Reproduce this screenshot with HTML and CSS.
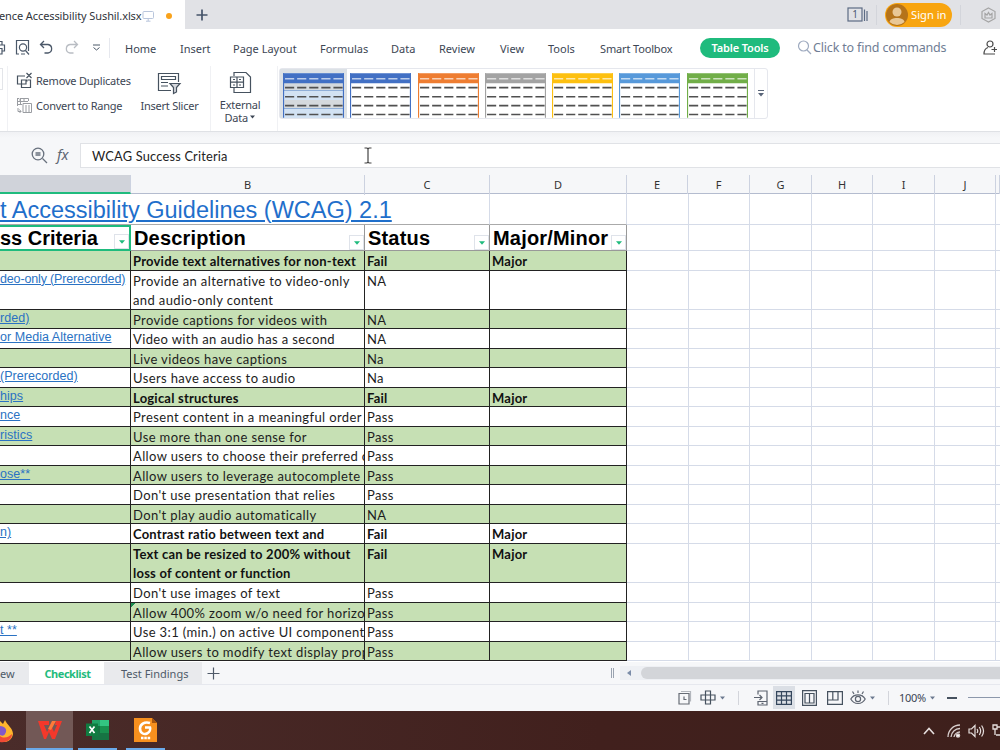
FILE: index.html
```html
<!DOCTYPE html>
<html lang="en">
<head>
  <meta charset="UTF-8">
  <title>Accessibility Sushil.xlsx</title>
  <link rel="stylesheet" href="styles.css">
</head>
<body>
  <!-- shared shapes -->
  <svg class="defs">
    <symbol id="thumb" viewBox="0 0 60 44">
      <path d="M.5 0V44M59.5 0V44" stroke="currentColor" stroke-width="1.2"/>
      <path d="M0 0H60V10H0Z" fill="currentColor"/>
      <path d="M2 5.5H59" stroke="#fff" stroke-opacity=".65" stroke-width="1.3" stroke-dasharray="9 2.9"/>
      <path d="M2 14.3H59M2 23.2H59M2 32H59M2 40.7H59" stroke="#505050" stroke-width="1.6" stroke-dasharray="9 2.9"/>
    </symbol>
    <symbol id="caret" viewBox="0 0 6 4"><path d="M0 .3H6L3 3.8Z" fill="currentColor"/></symbol>
  </svg>

  <div class="titlebar">
    <div class="tab">
      <span class="tab-name">ence Accessibility Sushil.xlsx</span>
      <svg width="13" height="12" fill="none" stroke="#b9c6dc"><rect x="1" y="1.5" width="10.5" height="7" rx="1"/><path d="M6.2 8.5V11M4 11.2H8.5"/></svg>
      <i class="dot"></i>
    </div>
    <svg class="new-tab" width="12" height="12" stroke="#45546a" stroke-width="1.7"><path d="M6 .5V11.5M.5 6H11.5"/></svg>
    <div class="title-right">
      <svg width="21" height="15" fill="none" stroke="#5c6b84" stroke-width="1.2"><rect x="1" y="1" width="14" height="13"/><path d="M17.5 2.500V14M20 4V14"/><text x="8" y="11.300" text-anchor="middle" class="badge-num">1</text></svg>
      <i class="vsep"></i>
      <div class="signin">
        <svg width="22" height="22"><circle cx="11" cy="11" r="11" fill="#b5731a"/><circle cx="11" cy="8" r="4.500" fill="#e9c795"/><path d="M3.500 18C4 12.500 18 12.500 18.500 18A11 11 0 0 1 3.500 18Z" fill="#e9c795"/></svg>
        <span>Sign in</span>
      </div>
      <i class="vsep"></i>
      <svg class="crown" width="15" height="16" fill="none" stroke="#a5a5a5" stroke-width="1.200"><path d="M7.500 1L14 4.500V11.500L7.500 15L1 11.500V4.500Z"/><path d="M4 6.500L6 8L7.500 5.500L9 8L11 6.500V11H4Z"/></svg>
    </div>
  </div>

  <div class="menubar">
    <div class="quick">
      <svg width="6" height="18" fill="none" stroke="#4b5869" stroke-width="1.200"><path d="M0 2.500H2V6M0 6H4.500V12H2M0 9.500H2V15H0"/></svg>
      <svg width="15" height="17" fill="none" stroke="#4b5869" stroke-width="1.200"><path d="M4 15H1.500V1.500H13.500V12M6 15H10"/><circle cx="8" cy="8.500" r="3.600"/><path d="M10.500 11.500L14 15.500"/></svg>
      <svg width="15" height="15" fill="none" stroke="#4b5869" stroke-width="1.300"><path d="M5 1L1.500 4.500L5 8M1.500 4.500H9A4.300 4.300 0 0 1 9 13H5.500"/></svg>
      <svg width="15" height="15" fill="none" stroke="#b9bdc3" stroke-width="1.300"><path d="M10 1L13.500 4.500L10 8M13.500 4.500H6A4.300 4.300 0 0 0 6 13H9.500"/></svg>
      <svg width="9" height="8" fill="none" stroke="#4b5869"><path d="M1 1H8M1.500 3.500L4.500 6L7.500 3.500"/></svg>
      <i class="vsep"></i>
    </div>
    <nav class="menu">
      <span>Home</span><span>Insert</span><span>Page Layout</span><span>Formulas</span><span>Data</span><span>Review</span><span>View</span><span>Tools</span><span>Smart Toolbox</span>
    </nav>
    <div class="pill">Table Tools</div>
    <div class="search">
      <svg width="15" height="15" fill="none" stroke="#9fabc0" stroke-width="1.200"><circle cx="6.500" cy="6" r="5"/><path d="M10 10L14 14"/></svg>
      <span>Click to find commands</span>
    </div>
    <svg class="share" width="15" height="16" fill="none" stroke="#4a4a4a" stroke-width="1.200"><circle cx="7" cy="4" r="3"/><path d="M5 7.500C2 8.500 1 11 1 14H12M8.500 9.500H14M11.500 7V12"/></svg>
  </div>

  <div class="ribbon">
    <i class="stub"></i>
    <div class="tools">
      <div class="tool">
        <svg width="17" height="17" fill="none" stroke="#46525f" stroke-width="1.200"><path d="M9 4H1.500V12H6M11 9.500V8H5.500V15.500H14.500V8H12M5.500 12H10V8M10.500 1L15.500 6M15.500 1L10.500 6"/></svg>
        <span>Remove Duplicates</span>
      </div>
      <div class="tool">
        <svg width="17" height="17" fill="none" stroke="#9a9da2"><path d="M4 4V1.500H12.500V4M1 1.500H3M1 4.500H12M1 7.500H6M1.500 1V9M4.500 1V8M8 1V5M2 11V14.500H5M3.500 12.500L5 14.500L3.500 16M7 6.500H15.500V15.500H7ZM10 8V15M13 8V15"/></svg>
        <span>Convert to Range</span>
      </div>
    </div>
    <div class="big slicer">
      <svg width="25" height="23" fill="none" stroke="#46525f" stroke-width="1.200"><path d="M14 18.500H1.500V1.500H21.500V10M4.500 4.500H18.500V7.500H4.500ZM4 10.500H11M4 14H11"/><path d="M13 11.500H23L19.500 15.500V20L16.500 21.500V15.500Z" fill="#d5d8dd"/></svg>
      <span>Insert Slicer</span>
    </div>
    <div class="big external">
      <svg width="23" height="23" fill="none" stroke="#46525f" stroke-width="1.200"><path d="M5 5V1.500H17L21.500 6V21.500H5V17"/><path d="M1.500 6H14.500V16.500H1.500ZM1.500 11.200H14.500M8 6V16.500M4 8.500H6M10 8.500H12M4 14H6M10 14H12"/></svg>
      <span>External<br>Data <svg width="5" height="4" class="up"><use href="#caret"/></svg></span>
    </div>
    <div class="gallery">
      <div class="style selected blue"><svg width="61" height="45"><use href="#thumb"/></svg></div>
      <div class="style blue"><svg width="61" height="45"><use href="#thumb"/></svg></div>
      <div class="style orange"><svg width="61" height="45"><use href="#thumb"/></svg></div>
      <div class="style gray"><svg width="61" height="45"><use href="#thumb"/></svg></div>
      <div class="style gold"><svg width="61" height="45"><use href="#thumb"/></svg></div>
      <div class="style sky"><svg width="61" height="45"><use href="#thumb"/></svg></div>
      <div class="style green"><svg width="61" height="45"><use href="#thumb"/></svg></div>
      <div class="more"><svg width="6" height="7" stroke="#596579"><path d="M0 .5H6"/><path d="M0 3H6L3 6.500Z" fill="#596579" stroke="none"/></svg></div>
    </div>
  </div>

  <div class="formula">
    <svg width="17" height="17" fill="none" stroke="#68717e" stroke-width="1.300"><circle cx="7" cy="7" r="5.800"/><path d="M11.500 11.500L16 16M4.500 6H9.500M4.500 8H9.500"/></svg>
    <span class="fx">fx</span>
    <div class="input">WCAG Success Criteria
      <svg class="ibeam" width="8" height="17" fill="none" stroke="#444" stroke-width="1.200"><path d="M.5 1H3L4 2L5 1H7.500M4 2V15M.5 16H3L4 15L5 16H7.500"/></svg>
    </div>
  </div>

  <div class="sheet">
    <div class="cols">
      <span class="active"></span><span>B</span><span>C</span><span>D</span><span>E</span><span>F</span><span>G</span><span>H</span><span>I</span><span>J</span><span></span>
    </div>
    <div class="row title"><div class="link">t Accessibility Guidelines (WCAG) 2.1</div><div></div><div class="blank"></div></div>
    <div class="row head">
      <div class="cursor">ss Criteria<b class="filter"><svg width="6" height="4"><use href="#caret"/></svg></b></div>
      <div>Description<b class="filter"><svg width="6" height="4"><use href="#caret"/></svg></b></div>
      <div>Status<b class="filter"><svg width="6" height="4"><use href="#caret"/></svg></b></div>
      <div>Major/Minor<b class="filter"><svg width="6" height="4"><use href="#caret"/></svg></b></div>
      <div class="blank"></div>
    </div>
    <div class="row band bold"><div></div><div>Provide text alternatives for non-text</div><div>Fail</div><div>Major</div><div class="blank"></div></div>
    <div class="row tall"><div><a class="long">deo-only (Prerecorded)</a></div><div>Provide an alternative to video-only<br>and audio-only content</div><div>NA</div><div></div><div class="blank"></div></div>
    <div class="row band"><div><a>rded)</a></div><div>Provide captions for videos with</div><div>NA</div><div></div><div class="blank"></div></div>
    <div class="row"><div><a>or Media Alternative</a></div><div>Video with an audio has a second</div><div>NA</div><div></div><div class="blank"></div></div>
    <div class="row band"><div></div><div>Live videos have captions</div><div>Na</div><div></div><div class="blank"></div></div>
    <div class="row"><div><a>(Prerecorded)</a></div><div>Users have access to audio</div><div>Na</div><div></div><div class="blank"></div></div>
    <div class="row band bold"><div><a>hips</a></div><div>Logical structures</div><div>Fail</div><div>Major</div><div class="blank"></div></div>
    <div class="row"><div><a>nce</a></div><div>Present content in a meaningful order</div><div>Pass</div><div></div><div class="blank"></div></div>
    <div class="row band"><div><a>ristics</a></div><div>Use more than one sense for</div><div>Pass</div><div></div><div class="blank"></div></div>
    <div class="row"><div></div><div>Allow users to choose their preferred o</div><div>Pass</div><div></div><div class="blank"></div></div>
    <div class="row band"><div><a>ose**</a></div><div>Allow users to leverage autocomplete</div><div>Pass</div><div></div><div class="blank"></div></div>
    <div class="row"><div></div><div>Don't use presentation that relies</div><div>Pass</div><div></div><div class="blank"></div></div>
    <div class="row band"><div></div><div>Don't play audio automatically</div><div>NA</div><div></div><div class="blank"></div></div>
    <div class="row bold"><div><a>n)</a></div><div>Contrast ratio between text and</div><div>Fail</div><div>Major</div><div class="blank"></div></div>
    <div class="row tall band bold"><div></div><div>Text can be resized to 200% without<br>loss of content or function</div><div>Fail</div><div>Major</div><div class="blank"></div></div>
    <div class="row"><div></div><div>Don't use images of text</div><div>Pass</div><div></div><div class="blank"></div></div>
    <div class="row band"><div></div><div class="note">Allow 400% zoom w/o need for horizon</div><div>Pass</div><div></div><div class="blank"></div></div>
    <div class="row"><div><a>t **</a></div><div>Use 3:1 (min.) on active UI components</div><div>Pass</div><div></div><div class="blank"></div></div>
    <div class="row band"><div></div><div>Allow users to modify text display prop</div><div>Pass</div><div></div><div class="blank"></div></div>
  </div>

  <div class="sheet-tabs">
    <span class="first">ew</span><span class="current">Checklist</span><span class="findings">Test Findings</span>
    <svg class="add" width="13" height="13" stroke="#4f5a69" stroke-width="1.200"><path d="M6.500 .5V12.500M.5 6.500H12.500"/></svg>
    <div class="scroll">
      <i class="grip"></i>
      <div class="track"><svg width="4" height="6"><path d="M4 0V6L0 3Z" fill="#7b8ca8"/></svg><i class="bar"></i></div>
    </div>
  </div>

  <div class="status">
    <svg width="14" height="15" fill="none" stroke="#666c75" stroke-width="1.200"><path d="M3 1.500H12.500V11.500" stroke="#b3b7bd"/><path d="M1 3.500H11V14H1ZM6 6.500V9.500H8.500"/></svg>
    <svg class="cross" width="16" height="15" fill="none" stroke="#46525f" stroke-width="1.200"><path d="M5.500 1H10.500V14H5.500ZM1 5H15V10H1Z"/></svg>
    <svg class="drop" width="5" height="4"><use href="#caret"/></svg>
    <i class="vsep s1"></i>
    <svg class="phone" width="14" height="16" fill="none" stroke="#5d6470" stroke-width="1.200"><path d="M4 4.500V1H13V15H4V11M0 7.500H8M5.500 5L8 7.500L5.500 10M4 11.500H13M7.500 13.300H9.500"/></svg>
    <div class="on"><svg width="16" height="14" fill="none" stroke="#34465c" stroke-width="1.200"><path d="M.6 .6H15.400V13.400H.6ZM.6 4.800H15.400M.6 9.100H15.400M5.500 .6V13.400M10.500 .6V13.400"/></svg></div>
    <svg class="page" width="15" height="16" fill="none" stroke="#46525f" stroke-width="1.200"><path d="M.6 .6H14.400V15.400H.6ZM3 3.500H12V13H3ZM7.500 3.500V13"/></svg>
    <svg class="split" width="16" height="14" fill="none" stroke="#46525f" stroke-width="1.200"><path d="M.6 .6H15.400V13.400H.6ZM.6 9H11V.6M5.800 .6V9"/></svg>
    <svg class="eye" width="16" height="15" fill="none" stroke="#5d6470" stroke-width="1.200"><path d="M.8 9C4 3.500 12 3.500 15.200 9C12 15 4 15 .8 9ZM8 .5V3M2.500 1.500L4 4M13.500 1.500L12 4"/><circle cx="8" cy="9" r="2.600"/></svg>
    <svg class="drop" width="5" height="4"><use href="#caret"/></svg>
    <i class="vsep s2"></i>
    <span class="zoom">100%</span>
    <svg class="drop d3" width="5" height="4"><use href="#caret"/></svg>
    <i class="minus"></i>
    <i class="slider"></i>
  </div>

  <div class="taskbar">
    <div class="app fox"><svg width="14" height="24"><path d="M0 2L3 5L5 1C7 6 13 9 13 15A9 9 0 0 1 0 22Z" fill="#ffb52d"/><path d="M0 17C4 20 9 18 12 15C12 21 6 24 0 23Z" fill="#f04a35"/><path d="M0 7C5 7 8 11 5 15C4 17 2 17 0 16Z" fill="#8358c8"/></svg></div>
    <div class="app wps open"><svg width="24" height="20"><path d="M0 1H11V5H6L9 12L13 5L16 12L19 5H17L18 1H24L17 19H14L11 12L8 19H6Z" fill="#f4382b"/><path d="M10 9L14 1H18L13 10Z" fill="#ff7a38"/></svg></div>
    <div class="app xl open"><svg width="24" height="22"><path d="M6 1H23V21H6Z" fill="#167443"/><path d="M14 1H23V7H14Z" fill="#33c481"/><path d="M6 1H14V7H6Z" fill="#21a366"/><path d="M14 7H23V14H14Z" fill="#18914f"/><path d="M0 4.500H12V17H0Z" fill="#107c41"/><path d="M3.500 7.500L8.500 14M8.500 7.500L3.500 14" stroke="#fff" stroke-width="1.700"/></svg></div>
    <div class="app foxit open"><svg width="24" height="24"><path d="M0 0H18L23 5V24H0Z" fill="#f7901e"/><path d="M18 0V5H23Z" fill="#a8550d"/><path d="M16 5C10 3 6 7 6 10.500C6 15 10 17 13 15.500C16 14 16.500 11 16 9.500H11" fill="none" stroke="#fff" stroke-width="2.600"/><path d="M7 20H17" stroke="#fff" stroke-width="2.500" stroke-dasharray="2.500 .8"/></svg></div>
    <div class="tray">
      <svg width="12" height="8" fill="none" stroke="#e6dfde" stroke-width="1.600"><path d="M1 7L6 1.500L11 7"/></svg>
      <svg width="14" height="14" fill="none" stroke="#d8cfce" stroke-width="1.300"><path d="M1 13A12 12 0 0 1 13 1M4 13A9 9 0 0 1 13 4.500M7 13A6 6 0 0 1 13 8"/><circle cx="11" cy="11.500" r="1.600" fill="#fff"/></svg>
      <svg width="17" height="14" fill="none" stroke="#e6dfde" stroke-width="1.200"><path d="M1 5H3.500L7 1.500V12.500L3.500 9H1ZM9 5Q10.500 7 9 9M11.300 3Q14 7 11.300 11M13.600 1.500Q17.500 7 13.600 12.500"/></svg>
      <svg width="8" height="13" fill="none" stroke="#e6dfde" stroke-width="1.300"><path d="M1 1V5H5V1ZM3 5V11M5 3H9M4 11H9"/></svg>
    </div>
  </div>
</body>
</html>
```
FILE: styles.css
```css
* {
  box-sizing: border-box;
}
body {
  margin: 0;
  width: 1000px;
  height: 750px;
  overflow: hidden;
  display: flex;
  flex-direction: column;
  font-family: "Noto Sans", sans-serif;
  font-size: 11px;
  color: #3c4654;
  background-color: #fff;
}
svg {
  display: block;
  flex-shrink: 0;
}
.defs {
  display: none;
}
.vsep {
  width: 1px;
  height: 20px;
  background-color: #d3d5db;
}

/* title bar */
.titlebar {
  display: flex;
  align-items: center;
  height: 29px;
  flex-shrink: 0;
  background-color: #e1e2e6;
}
.tab {
  display: flex;
  align-items: center;
  width: 185px;
  height: 29px;
  padding-top: 2px;
  background-color: #fff;
  color: #30343a;
  white-space: nowrap;
}
.tab-name {
  width: 142px;
  text-indent: -1px;
  letter-spacing: -0.1px;
}
.dot {
  width: 6px;
  height: 6px;
  margin-left: 11px;
  border-radius: 50%;
  background-color: #f9a21b;
}
.new-tab {
  margin-left: 11px;
}
.title-right {
  display: flex;
  align-items: center;
  margin-left: auto;
  height: 29px;
}
.title-right .vsep {
  margin-left: 8px;
}
.badge-num {
  font-size: 10px;
  fill: #4b5a72;
  stroke: none;
}
.signin {
  display: flex;
  align-items: center;
  gap: 3px;
  width: 67px;
  height: 24px;
  margin-left: 8px;
  padding-left: 1px;
  border-radius: 12px;
  background-color: #f8a510;
  color: #fff;
  font-size: 11.2px;
  white-space: nowrap;
}
.crown {
  margin: 0 4px 0 20px;
}

/* menu */
.menubar {
  display: flex;
  align-items: center;
  height: 37px;
  flex-shrink: 0;
}
.quick {
  display: flex;
  align-items: center;
  width: 125px;
}
.quick svg:nth-child(2) { margin-left: 9px; }
.quick svg:nth-child(3) { margin-left: 9px; }
.quick svg:nth-child(4) { margin-left: 10px; }
.quick svg:nth-child(5) { margin-left: 13px; }
.quick .vsep {
  margin-left: 8px;
  background-color: #e6e8ee;
}
.menu {
  display: grid;
  grid-template-columns: 55px 53px 87px 71px 48px 61px 48px 52px 100px;
  padding-top: 2px;
  white-space: nowrap;
}
.menu span:last-child {
  letter-spacing: -0.15px;
}
.pill {
  width: 80px;
  height: 20px;
  line-height: 20px;
  border-radius: 10px;
  background-color: #1fbb7d;
  color: #fff;
  font-weight: 600;
  letter-spacing: -0.15px;
  text-align: center;
}
.search {
  display: flex;
  align-items: center;
  width: 201px;
  padding-left: 17px;
  gap: 1px;
  font-size: 12.5px;
  letter-spacing: -0.17px;
  color: #6f7d94;
  white-space: nowrap;
}
.share {
  margin-left: 2px;
}

/* ribbon */
.ribbon {
  display: flex;
  height: 66px;
  flex-shrink: 0;
  border-bottom: 1px solid #dfe1e5;
  white-space: nowrap;
}
.stub {
  width: 3px;
  height: 22px;
  margin-top: 2px;
  border: 1px solid #e3e5e9;
  border-left: 0;
}
.tools {
  width: 130px;
  margin-left: 4px;
  padding: 2px 0 0 8px;
  border-left: 1px solid #f0f1f4;
  letter-spacing: -0.22px;
}
.tool {
  display: flex;
  align-items: center;
  height: 25px;
  gap: 3px;
}
.big {
  display: flex;
  flex-direction: column;
  align-items: center;
  line-height: 13px;
  text-align: center;
}
.slicer {
  width: 65px;
  padding-top: 6px;
  gap: 4px;
  letter-spacing: -0.25px;
}
.external {
  width: 68px;
  margin-left: 8px;
  padding-top: 5px;
  padding-right: 8px;
  gap: 4px;
  border-right: 1px solid #f0f1f4;
  border-left: 1px solid #f0f1f4;
  letter-spacing: -0.25px;
}
.up {
  display: inline-block;
  vertical-align: 3px;
}
.gallery {
  display: flex;
  width: 489px;
  height: 51px;
  margin: 2px 0 0 1px;
  border: 1px solid #e5e7ed;
  border-radius: 3px;
}
.style {
  width: 67.3px;
  padding: 4px 0 0 3px;
}
.selected {
  background-color: #dce1e6;
}
.selected svg {
  background: repeating-linear-gradient(#d2e2f3 0 9px, #d5d9dd 9px 17px, #90afd8 17px 18px);
}
.blue { color: #4270c4; }
.orange { color: #ee7d31; }
.gray { color: #a3a3a3; }
.gold { color: #fdc010; }
.sky { color: #5799da; }
.green { color: #71ae48; }
.more {
  width: 13px;
  margin-left: auto;
  padding: 21px 0 0 3px;
  border-left: 1px solid #e5e7ed;
}

/* formula bar */
.formula {
  display: flex;
  align-items: center;
  height: 43px;
  flex-shrink: 0;
  padding: 4px 0 0 31px;
  background: linear-gradient(#f0f1f4, #f6f7f9 6px);
}
.fx {
  width: 32px;
  padding: 0 0 3px 9px;
  font-style: italic;
  font-size: 14.5px;
  color: #5d6673;
}
.input {
  position: relative;
  flex: 1;
  height: 25px;
  line-height: 24px;
  padding-left: 11px;
  border: 1px solid #e0e2e6;
  border-right: 0;
  background-color: #fff;
  font-family: Lato, sans-serif;
  font-size: 12.8px;
  letter-spacing: 0.2px;
  color: #222;
}
.ibeam {
  position: absolute;
  left: 283px;
  top: 3px;
}

/* grid */
.sheet {
  height: 487px;
  flex-shrink: 0;
  overflow: hidden;
}
.cols {
  display: grid;
  grid-template-columns: 131px 234px 125px 137px 61px 62px 62px 61px 62px 61px 4px;
  height: 19px;
  line-height: 20px;
  border-bottom: 1px solid #b4bccf;
  background-color: #f6f7f9;
  text-align: center;
  color: #333;
}
.cols span {
  border-right: 1px solid #ccd2e0;
}
.cols .active {
  height: 19px;
  border-bottom: 2px solid #1fbb7d;
  background-color: #d0d3da;
}
.row {
  display: grid;
  grid-template-columns: 131px 234px 125px 137px 1fr;
  height: 19.54px;
  line-height: 19.5px;
  font-family: Lato, sans-serif;
  font-size: 13px;
  letter-spacing: 0.38px;
  color: #1d1d1d;
  white-space: nowrap;
}
.tall {
  height: 39.08px;
}
.row > div {
  padding: 1px 0 0 2px;
  border-right: 1px solid #222;
  border-bottom: 1px solid #222;
  overflow: hidden;
}
.row > div:first-child {
  padding: 0;
}
.band > div {
  background-color: #c6e0b4;
}
.bold {
  font-weight: bold;
  letter-spacing: 0.22px;
  color: #111;
}
.row > .blank {
  border-right: 0;
  border-bottom-color: #d5dbe8;
  background: repeating-linear-gradient(90deg, #fff 0 60.5px, #d5dbe8 60.5px 61.5px);
}
.row a {
  display: block;
  width: max-content;
  font-family: "Liberation Sans", sans-serif;
  font-weight: normal;
  font-size: 12.5px;
  line-height: 17px;
  letter-spacing: 0.05px;
  color: #2a72c3;
  text-decoration: underline;
}
.row .long {
  letter-spacing: -0.15px;
}
.title {
  grid-template-columns: 490px 137px 1fr;
  height: 31px;
  line-height: 32px;
  letter-spacing: 0;
}
.title > div {
  border-color: #d5dbe8;
  border-bottom-color: #aaa;
}
.title .link {
  font-family: "Liberation Sans", sans-serif;
  font-size: 23.5px;
  color: #1f6fcb;
  text-decoration: underline;
  text-decoration-thickness: 2px;
  text-underline-offset: 2px;
}
.head {
  height: 26px;
  line-height: 26px;
  font-family: "Liberation Sans", sans-serif;
  font-weight: bold;
  font-size: 20px;
  letter-spacing: 0.18px;
  color: #000;
}
.head > div {
  position: relative;
  padding: 0 0 0 3px;
  border-color: #999;
}
.head > .cursor {
  line-height: 22px;
  letter-spacing: 0;
  border: 2px solid #1fbb7d;
  border-left: 0;
}
.filter {
  position: absolute;
  right: 0;
  bottom: 0;
  display: flex;
  align-items: center;
  justify-content: center;
  width: 15px;
  height: 15px;
  padding-top: 1px;
  border: 1px solid #dfe3ea;
  background-color: #fff;
  color: #1fbb7d;
}
.note {
  background-image: linear-gradient(135deg, #1a8a50 3px, transparent 3px);
}

/* sheet tabs */
.sheet-tabs {
  display: flex;
  height: 23px;
  flex-shrink: 0;
  line-height: 23px;
  border-bottom: 1px solid #e6e8ee;
  background-color: #f6f7f9;
  color: #4f5a69;
}
.first {
  width: 29px;
  background-color: #e9eaed;
}
.current {
  width: 75px;
  padding-left: 2px;
  background-color: #fff;
  color: #1fbb7d;
  font-weight: bold;
  letter-spacing: -0.45px;
  text-align: center;
}
.findings {
  width: 98px;
  padding-left: 17px;
  background-color: #e9eaed;
}
.add {
  margin: 5px 0 0 5px;
}
.scroll {
  display: flex;
  align-items: center;
  width: 389px;
  margin-left: auto;
}
.grip {
  width: 3px;
  height: 10px;
  border: 1px solid #9aa3b0;
  border-width: 0 1px;
}
.track {
  display: flex;
  align-items: center;
  flex: 1;
  height: 14px;
  margin-left: 6px;
  padding-left: 7px;
  background-color: #eef0f4;
}
.bar {
  flex: 1;
  height: 12px;
  margin-left: 10px;
  border-radius: 6px 0 0 6px;
  background-color: #d3d5d9;
}

/* status bar */
.status {
  display: flex;
  align-items: center;
  height: 26px;
  flex-shrink: 0;
  padding: 0 0 1px 678px;
  background-color: #f6f7f9;
}
.cross { margin-left: 8px; }
.drop {
  margin-left: 4px;
  color: #6c7a90;
}
.status .vsep {
  height: 14px;
}
.s1 { margin-left: 13px; }
.phone { margin-left: 15px; }
.on {
  display: flex;
  align-items: center;
  justify-content: center;
  width: 22px;
  height: 23px;
  margin-left: 5px;
  background-color: #dbdfe5;
}
.page { margin-left: 7px; }
.split { margin-left: 10px; }
.eye { margin-left: 7px; }
.s2 { margin-left: 13px; }
.zoom {
  width: 28px;
  margin-left: 10px;
  letter-spacing: -0.3px;
}
.d3 { margin-left: 3px; }
.minus {
  width: 10px;
  height: 2px;
  margin-left: 12px;
  background-color: #46525f;
}
.slider {
  flex: 1;
  height: 1px;
  margin-left: 11px;
  background-color: #8c98ab;
}

/* taskbar */
.taskbar {
  display: flex;
  height: 39px;
  flex-shrink: 0;
  background: linear-gradient(90deg, #4a2c2a, #41201d 60%, #3e201c);
}
.app {
  display: flex;
  align-items: center;
  justify-content: center;
  height: 39px;
}
.fox {
  width: 26px;
  justify-content: flex-start;
}
.open {
  border-bottom: 2px solid #6aaaea;
}
.wps {
  width: 47px;
  background-color: #725856;
}
.xl {
  width: 39px;
  margin-left: 5px;
}
.foxit {
  width: 39px;
  margin-left: 9px;
}
.tray {
  display: flex;
  align-items: center;
  margin-left: auto;
  gap: 7px;
}
.tray svg:first-child {
  margin-right: 5px;
}
```
